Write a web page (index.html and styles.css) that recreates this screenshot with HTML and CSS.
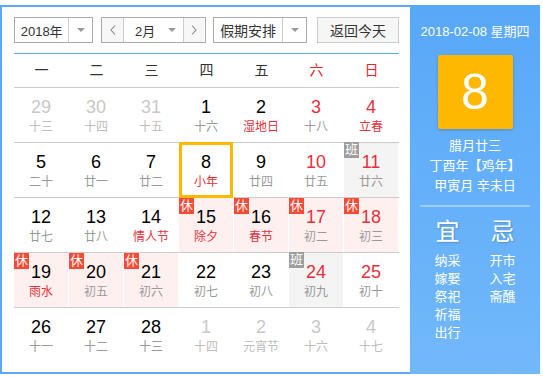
FILE: index.html
```html
<!DOCTYPE html>
<html lang="zh-CN">
<head>
<meta charset="utf-8">
<title>万年历</title>
<link rel="stylesheet" href="styles.css">
</head>
<body>
<div class="cal">
  <div class="main">
    <div class="toolbar">
      <div class="sel sel-year"><span class="sel-text">2018年</span><span class="sel-drop"><i class="tri"></i></span></div>
      <div class="month-group">
        <span class="nav-btn"><svg width="6" height="10" viewBox="0 0 6 10"><polyline points="5,0.5 1,5 5,9.5" fill="none" stroke="#888" stroke-width="1.1"/></svg></span>
        <span class="month-sel"><span class="month-text">2月</span><i class="tri"></i></span>
        <span class="nav-btn"><svg width="6" height="10" viewBox="0 0 6 10"><polyline points="1,0.5 5,5 1,9.5" fill="none" stroke="#888" stroke-width="1.1"/></svg></span>
      </div>
      <div class="sel sel-hol"><span class="sel-text">假期安排</span><span class="sel-drop"><i class="tri"></i></span></div>
      <button class="today-btn">返回今天</button>
    </div>
    <div class="weekdays">
      <span>一</span><span>二</span><span>三</span><span>四</span><span>五</span><span class="we">六</span><span class="we">日</span>
    </div>
    <div class="weeks">
      <div class="week">
        <div class="cell other"><div class="num">29</div><div class="lunar">十三</div></div>
        <div class="cell other"><div class="num">30</div><div class="lunar">十四</div></div>
        <div class="cell other"><div class="num">31</div><div class="lunar">十五</div></div>
        <div class="cell"><div class="num">1</div><div class="lunar">十六</div></div>
        <div class="cell fest"><div class="num">2</div><div class="lunar">湿地日</div></div>
        <div class="cell weekend"><div class="num">3</div><div class="lunar">十八</div></div>
        <div class="cell weekend fest"><div class="num">4</div><div class="lunar">立春</div></div>
      </div>
      <div class="week">
        <div class="cell"><div class="num">5</div><div class="lunar">二十</div></div>
        <div class="cell"><div class="num">6</div><div class="lunar">廿一</div></div>
        <div class="cell"><div class="num">7</div><div class="lunar">廿二</div></div>
        <div class="cell fest today"><div class="num">8</div><div class="lunar">小年</div></div>
        <div class="cell"><div class="num">9</div><div class="lunar">廿四</div></div>
        <div class="cell weekend"><div class="num">10</div><div class="lunar">廿五</div></div>
        <div class="cell weekend work"><span class="badge">班</span><div class="num">11</div><div class="lunar">廿六</div></div>
      </div>
      <div class="week">
        <div class="cell"><div class="num">12</div><div class="lunar">廿七</div></div>
        <div class="cell"><div class="num">13</div><div class="lunar">廿八</div></div>
        <div class="cell fest"><div class="num">14</div><div class="lunar">情人节</div></div>
        <div class="cell fest rest"><span class="badge">休</span><div class="num">15</div><div class="lunar">除夕</div></div>
        <div class="cell fest rest"><span class="badge">休</span><div class="num">16</div><div class="lunar">春节</div></div>
        <div class="cell weekend rest"><span class="badge">休</span><div class="num">17</div><div class="lunar">初二</div></div>
        <div class="cell weekend rest"><span class="badge">休</span><div class="num">18</div><div class="lunar">初三</div></div>
      </div>
      <div class="week">
        <div class="cell fest rest"><span class="badge">休</span><div class="num">19</div><div class="lunar">雨水</div></div>
        <div class="cell rest"><span class="badge">休</span><div class="num">20</div><div class="lunar">初五</div></div>
        <div class="cell rest"><span class="badge">休</span><div class="num">21</div><div class="lunar">初六</div></div>
        <div class="cell"><div class="num">22</div><div class="lunar">初七</div></div>
        <div class="cell"><div class="num">23</div><div class="lunar">初八</div></div>
        <div class="cell weekend work"><span class="badge">班</span><div class="num">24</div><div class="lunar">初九</div></div>
        <div class="cell weekend"><div class="num">25</div><div class="lunar">初十</div></div>
      </div>
      <div class="week">
        <div class="cell"><div class="num">26</div><div class="lunar">十一</div></div>
        <div class="cell"><div class="num">27</div><div class="lunar">十二</div></div>
        <div class="cell"><div class="num">28</div><div class="lunar">十三</div></div>
        <div class="cell other"><div class="num">1</div><div class="lunar">十四</div></div>
        <div class="cell other"><div class="num">2</div><div class="lunar">元宵节</div></div>
        <div class="cell other"><div class="num">3</div><div class="lunar">十六</div></div>
        <div class="cell other"><div class="num">4</div><div class="lunar">十七</div></div>
      </div>
    </div>
  </div>
  <aside class="side">
    <div class="side-date">2018-02-08 星期四</div>
    <div class="big-day">8</div>
    <div class="side-lunar">
      <div>腊月廿三</div>
      <div>丁酉年【鸡年】</div>
      <div>甲寅月 辛未日</div>
    </div>
    <div class="side-sep"></div>
    <div class="yiji">
      <div class="yj-col">
        <div class="yj-title">宜</div>
        <div class="yj-item">纳采</div>
        <div class="yj-item">嫁娶</div>
        <div class="yj-item">祭祀</div>
        <div class="yj-item">祈福</div>
        <div class="yj-item">出行</div>
      </div>
      <div class="yj-col">
        <div class="yj-title">忌</div>
        <div class="yj-item">开市</div>
        <div class="yj-item">入宅</div>
        <div class="yj-item">斋醮</div>
      </div>
    </div>
  </aside>
</div>
</body>
</html>
```

FILE: styles.css
```css
* { box-sizing: border-box; }
html, body { margin: 0; padding: 0; background: #fff; }
body {
  font-family: "Liberation Sans", "Noto Sans CJK SC", sans-serif;
  color: #000;
}
.cal {
  margin-top: 5px;
  width: 540px;
  height: 369px;
  display: flex;
}
.main {
  width: 410px;
  height: 369px;
  border: 2px solid #5aa8f8;
  border-right: none;
  padding: 10px 11px 10px 12px;
}
.toolbar {
  display: flex;
  height: 26px;
  margin-bottom: 10px;
  font-size: 13px;
  color: #333;
}
.sel {
  display: flex;
  height: 26px;
  border: 1px solid #aaa;
  background: #fff;
}
.sel-text {
  display: flex;
  align-items: center;
  justify-content: center;
  border-right: 1px solid #ccc;
}
.sel-drop {
  display: flex;
  align-items: center;
  justify-content: center;
  width: 23px;
}
.tri {
  display: block;
  width: 0;
  height: 0;
  border-left: 4px solid transparent;
  border-right: 4px solid transparent;
  border-top: 4px solid #999;
}
.sel-year { width: 79px; }
.sel-year .sel-text { width: 55px; }
.month-group {
  display: flex;
  margin-left: 8px;
  width: 105px;
  height: 26px;
  border: 1px solid #aaa;
}
.nav-btn {
  display: flex;
  align-items: center;
  justify-content: center;
  width: 22px;
  background: #f7f7f7;
}
.nav-btn:first-child { border-right: 1px solid #ccc; }
.nav-btn:last-child { border-left: 1px solid #ccc; width: 21px; }
.nav-btn svg { display: block; }
.month-sel {
  display: flex;
  align-items: center;
  width: 59px;
  padding-left: 11px;
  background: #fff;
}
.month-text { width: 33px; }
.sel-hol { margin-left: 7px; width: 94px; }
.sel-hol .sel-text { width: 70px; font-size: 14px; }
.today-btn {
  margin-left: 10px;
  width: 82px;
  height: 26px;
  padding: 0;
  border: 1px solid #ccc;
  background: #f6f6f6;
  font-family: "Liberation Sans", "Noto Sans CJK SC", sans-serif;
  font-size: 14px;
  color: #333;
}
.weekdays {
  display: grid;
  grid-template-columns: repeat(7, 55px);
  height: 35px;
  border-top: 1px solid #5aa8f8;
  border-bottom: 1px solid #ccc;
  line-height: 33px;
  text-align: center;
  font-size: 14px;
  color: #333;
}
.weekdays .we { color: #e8262a; }
.week {
  display: grid;
  grid-template-columns: repeat(7, 55px);
  border-bottom: 1px solid #ccc;
}
.week:last-child { border-bottom: none; }
.cell {
  position: relative;
  height: 54px;
  padding-top: 8px;
  border-right: 1px solid #fff;
  text-align: center;
}
.num {
  font-size: 18px;
  line-height: 22px;
  color: #000;
}
.lunar {
  font-size: 12px;
  line-height: 18px;
  color: #999;
}
.weekend .num { color: #e8303a; }
.fest .lunar { color: #e8303a; }
.other .num { color: #c8c8c8; }
.other .lunar { color: #bdbdbd; }
.rest { background: #fff0f0; }
.work { background: #f4f4f4; }
.badge {
  position: absolute;
  top: 0;
  left: 0;
  width: 15px;
  height: 16px;
  font-size: 13px;
  line-height: 16px;
  color: #fff;
  background: #f84a36;
  text-align: center;
}
.work .badge { background: #9e9e9e; top: -1px; }
.today::after {
  content: "";
  position: absolute;
  top: -1px;
  bottom: -1px;
  left: 0;
  right: 0;
  border: 3px solid #ffb800;
}
.side {
  width: 130px;
  height: 369px;
  background: linear-gradient(#58a8f8, #72b8fb);
  color: #fff;
  display: flex;
  flex-direction: column;
  align-items: center;
  padding-top: 17px;
  font-size: 13px;
}
.side-date { line-height: 20px; }
.big-day {
  margin-top: 13px;
  width: 75px;
  height: 74px;
  background: #ffb800;
  border-radius: 2px;
  box-shadow: 0 1px 3px rgba(0, 0, 0, 0.2);
  font-size: 50px;
  line-height: 74px;
  text-align: center;
}
.side-lunar {
  margin-top: 7px;
  line-height: 20px;
  text-align: center;
}
.side-sep {
  margin-top: 9px;
  width: 110px;
  height: 2px;
  background: rgba(255, 255, 255, 0.35);
}
.yiji {
  display: flex;
  margin-top: 10px;
}
.yj-col {
  width: 55px;
  text-align: center;
}
.yj-title {
  font-size: 24px;
  line-height: 30px;
  margin-bottom: 5px;
  text-shadow: 1px 1px 2px rgba(0, 0, 0, 0.2);
}
.yj-item {
  font-size: 13px;
  line-height: 18px;
}
```
